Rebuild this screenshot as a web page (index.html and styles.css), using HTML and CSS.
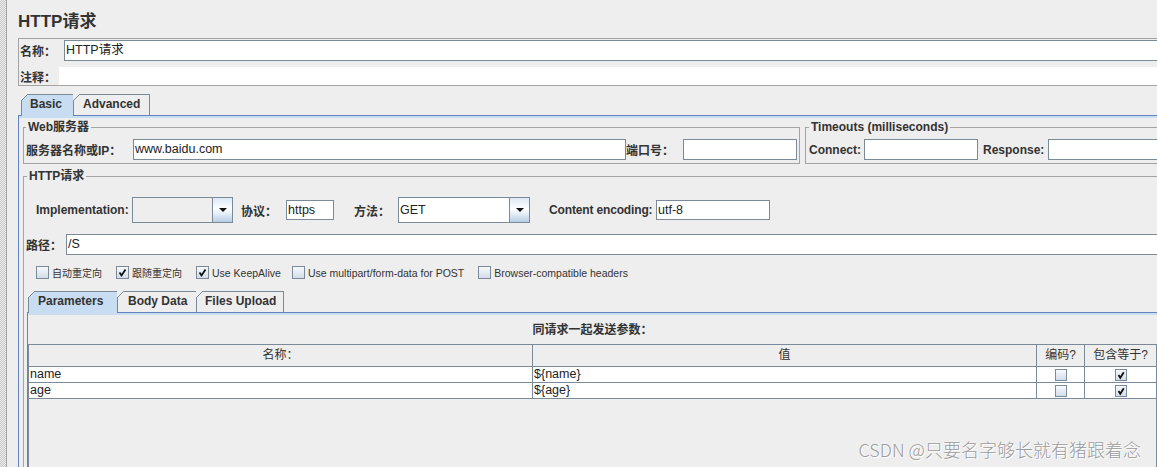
FILE: index.html
```html
<!DOCTYPE html>
<html>
<head>
<meta charset="utf-8">
<title>HTTP请求</title>
<link rel="stylesheet" href="styles.css">
</head>
<body>
<div class="app">
  <div class="strip"></div>
  <div class="main">
    <div class="title">HTTP请求</div>

    <div class="name-panel">
      <div class="name-row">
        <span class="lbl name-lbl">名称：</span>
        <div class="field name-field">HTTP请求</div>
      </div>
      <div class="comment-row">
        <span class="lbl comment-lbl">注释：</span>
        <div class="comment-field"></div>
      </div>
    </div>

    <div class="tabs tabs-main">
      <div class="tab tab-basic selected">Basic</div>
      <div class="tab tab-adv last">Advanced</div>
    </div>

    <div class="tab-panel basic-panel">
      <div class="server-row">
        <fieldset class="group web-group">
          <legend>Web服务器</legend>
          <div class="row">
            <span class="lbl host-lbl">服务器名称或IP：</span>
            <div class="field host-field">www.baidu.com</div>
            <span class="lbl port-lbl">端口号：</span>
            <div class="field port-field"></div>
          </div>
        </fieldset>
        <fieldset class="group timeout-group">
          <legend>Timeouts (milliseconds)</legend>
          <div class="row">
            <span class="lbl connect-lbl">Connect:</span>
            <div class="field t-field"></div>
            <span class="lbl response-lbl">Response:</span>
            <div class="field t-field"></div>
          </div>
        </fieldset>
      </div>

      <fieldset class="group http-group">
        <legend>HTTP请求</legend>
        <div class="impl-row">
          <span class="lbl impl-lbl">Implementation:</span>
          <div class="combo combo-impl">
            <div class="combo-value"></div>
            <div class="combo-btn"><span class="arrow"></span></div>
          </div>
          <span class="lbl proto-lbl">协议：</span>
          <div class="field small-field proto-field">https</div>
          <span class="lbl method-lbl">方法：</span>
          <div class="combo combo-method">
            <div class="combo-value">GET</div>
            <div class="combo-btn"><span class="arrow"></span></div>
          </div>
          <span class="lbl enc-lbl">Content encoding:</span>
          <div class="field small-field enc-field">utf-8</div>
        </div>

        <div class="path-row">
          <span class="lbl path-lbl">路径：</span>
          <div class="field path-field">/S</div>
        </div>

        <div class="check-row">
          <label class="check"><span class="box"></span><span>自动重定向</span></label>
          <label class="check"><span class="box"><svg viewBox="0 0 11 11" width="11" height="11"><path d="M2.5 5.5 L4.5 8.5 L8.5 2.5" fill="none" stroke="#111" stroke-width="1.8"/></svg></span><span>跟随重定向</span></label>
          <label class="check check-keep"><span class="box"><svg viewBox="0 0 11 11" width="11" height="11"><path d="M2.5 5.5 L4.5 8.5 L8.5 2.5" fill="none" stroke="#111" stroke-width="1.8"/></svg></span><span class="latin">Use KeepAlive</span></label>
          <label class="check"><span class="box"></span><span class="latin">Use multipart/form-data for POST</span></label>
          <label class="check"><span class="box"></span><span class="latin">Browser-compatible headers</span></label>
        </div>

        <div class="tabs tabs-params">
          <div class="tab tab-params selected">Parameters</div>
          <div class="tab tab-body">Body Data</div>
          <div class="tab tab-files last">Files Upload</div>
        </div>

        <div class="tab-panel params-panel">
          <div class="params-title">同请求一起发送参数：</div>
          <div class="scroll-pane">
            <div class="grid-row head">
              <div class="cell">名称：</div>
              <div class="cell">值</div>
              <div class="cell">编码?</div>
              <div class="cell">包含等于?</div>
            </div>
            <div class="grid-row">
              <div class="cell">name</div>
              <div class="cell">${name}</div>
              <div class="cell center"><span class="cbox"></span></div>
              <div class="cell center"><span class="cbox"><svg viewBox="0 0 10 10" width="10" height="10"><path d="M2.5 5 L4.3 7.8 L7.8 2.3" fill="none" stroke="#111" stroke-width="1.8"/></svg></span></div>
            </div>
            <div class="grid-row">
              <div class="cell">age</div>
              <div class="cell">${age}</div>
              <div class="cell center"><span class="cbox"></span></div>
              <div class="cell center"><span class="cbox"><svg viewBox="0 0 10 10" width="10" height="10"><path d="M2.5 5 L4.3 7.8 L7.8 2.3" fill="none" stroke="#111" stroke-width="1.8"/></svg></span></div>
            </div>
          </div>
        </div>
      </fieldset>
    </div>
  </div>
</div>
<div class="watermark">CSDN @只要名字够长就有猪跟着念</div>
</body>
</html>
```
FILE: styles.css
```css
* { box-sizing: border-box; }
html, body { margin: 0; padding: 0; }
html { overflow: hidden; }
body {
  width: 1157px;
  height: 467px;
  overflow: hidden;
  position: relative;
  background: #eeeeee;
  font-family: "Liberation Sans", "Noto Sans CJK SC", sans-serif;
  color: #333333;
}
.app {
  display: flex;
  width: 1157px;
  height: 467px;
  overflow: hidden;
}
.strip {
  flex: none;
  width: 7px;
  border-right: 1px solid #a3a3a3;
  background: repeating-conic-gradient(#c6c6c6 0 25%, #eeeeee 0 50%) 0 0 / 2px 2px;
}
.main {
  flex: none;
  width: 1158px;
  height: 467px;
  padding: 11px 0 0 11px;
}
.title {
  height: 22px;
  line-height: 22px;
  font-size: 17px;
  font-weight: bold;
  color: #333;
  white-space: nowrap;
}
.lbl {
  flex: none;
  font-size: 12px;
  font-weight: bold;
  color: #333;
  white-space: nowrap;
}
.field {
  flex: none;
  height: 21px;
  border: 1px solid #7a8a99;
  background: #fff;
  font-size: 12.5px;
  line-height: 19px;
  padding-left: 1px;
  white-space: nowrap;
  overflow: hidden;
  color: #222;
}

/* name / comment panel */
.name-panel {
  margin-top: 5px;
  height: 48px;
  border: 1px solid #a3a3a3;
  padding: 1px 0 0 1px;
}
.name-row { display: flex; align-items: center; height: 21px; }
.name-lbl { width: 44px; }
.name-field { flex: 1; margin-right: 1px; }
.comment-row { display: flex; align-items: center; height: 18px; margin-top: 6px; }
.comment-lbl { width: 39px; }
.comment-field { flex: 1; height: 18px; background: #fff; }

/* tabs */
.tabs {
  display: flex;
  align-items: flex-start;
  height: 21px;
  position: relative;
  z-index: 1;
}
.tabs-main { margin-top: 8px; padding-left: 3px; }
.tabs-params { margin-top: 12px; padding-left: 1px; }
.tab {
  position: relative;
  flex: none;
  height: 21px;
  border-top: 1px solid #7a8a99;
  border-left: 1px solid #7a8a99;
  background: #eeeeee;
  font-size: 12px;
  font-weight: bold;
  line-height: 19px;
  color: #333;
  white-space: nowrap;
}
.tab::before {
  content: "";
  position: absolute;
  left: -1px;
  top: -1px;
  width: 7px;
  height: 7px;
  background: linear-gradient(135deg, #eeeeee 0 calc(50% - 0.7px), #7a8a99 calc(50% - 0.7px) calc(50% + 0.7px), transparent calc(50% + 0.7px));
}
.tab.last { border-right: 1px solid #7a8a99; }
.tab.selected { background: #c8ddf2; height: 22px; }
.tab-basic { width: 52px; padding-left: 8px; }
.tab-adv { width: 77px; padding-left: 9px; }
.tab-params { width: 89px; padding-left: 9px; }
.tab-body { width: 79px; padding-left: 10px; }
.tab-files { width: 88px; padding-left: 8px; }

.tab-panel {
  border-top: 1px solid #6382bf;
  border-left: 1px solid #6382bf;
  border-right: 1px solid #6382bf;
  box-shadow: inset 0 2px 0 #c8ddf2;
}
.basic-panel { padding: 4px 2px 0 4px; height: 360px; }

/* fieldsets */
fieldset.group {
  margin: 0;
  min-width: 0;
  border: 1px solid #a3a3a3;
  padding: 5px 2px 3px 2px;
}
fieldset.group legend {
  padding: 0 2px;
  font-size: 12px;
  font-weight: bold;
  line-height: 14px;
  color: #333;
  white-space: nowrap;
}
.server-row { display: flex; align-items: flex-start; }
.web-group { flex: none; width: 777px; }
.timeout-group { flex: 1; margin-left: 5px !important; padding-left: 3px !important; }
.row { display: flex; align-items: center; height: 21px; }
.host-lbl { width: 107px; }
.host-field { width: 493px; }
.port-lbl { width: 57px; }
.port-field { width: 114px; }
.connect-lbl { width: 55px; }
.t-field { width: 114px; }
.response-lbl { width: 65px; margin-left: 5px; }

.http-group { margin-top: 5px !important; padding: 14px 3px 0 3px !important; height: 310px; }

.impl-row { display: flex; align-items: center; height: 26px; }
.impl-lbl { margin-left: 9px; width: 96px; }
.combo {
  flex: none;
  display: flex;
  height: 26px;
  border: 1px solid #7a8a99;
  background: #fff;
}
.combo-impl { width: 101px; background: #eeeeee; }
.combo-method { width: 132px; }
.combo-value {
  flex: 1;
  font-size: 12.5px;
  line-height: 24px;
  padding-left: 1px;
  color: #222;
}
.combo-btn {
  flex: none;
  width: 20px;
  border-left: 1px solid #7a8a99;
  background: linear-gradient(#dde8f3, #ffffff 45%, #b8cfe5);
  display: flex;
  align-items: center;
  justify-content: center;
}
.arrow {
  width: 0;
  height: 0;
  border-left: 4px solid transparent;
  border-right: 4px solid transparent;
  border-top: 4px solid #111;
}
.proto-lbl { margin-left: 8px; width: 45px; }
.small-field { height: 20px; line-height: 18px; }
.proto-field { width: 48px; }
.method-lbl { margin-left: 20px; width: 44px; }
.enc-lbl { margin-left: 19px; width: 107px; letter-spacing: -0.15px; }
.enc-field { width: 114px; }

.path-row { display: flex; align-items: center; height: 21px; margin-top: 11px; }
.path-lbl { width: 40px; margin-left: -1px; }
.path-field { flex: 1; }

.check-row {
  display: flex;
  align-items: center;
  height: 13px;
  margin-top: 11px;
  padding-left: 9px;
  font-size: 10px;
  color: #333;
}
.check { display: flex; align-items: center; margin-right: 14px; white-space: nowrap; }
.check-keep { margin-right: 11px; }
.latin { font-size: 10.5px; }
.box {
  flex: none;
  width: 13px;
  height: 13px;
  margin-right: 3px;
  border: 1px solid #7a8a99;
  background: linear-gradient(#f6f9fc, #d3dde8);
  display: flex;
  align-items: center;
  justify-content: center;
}

/* parameters panel */
.params-panel { padding-top: 10px; height: 170px; }
.params-title {
  text-align: center;
  font-size: 12px;
  font-weight: bold;
  line-height: 14px;
  color: #333;
}
.scroll-pane {
  margin-top: 7px;
  height: 130px;
  border-top: 1px solid #7a8a99;
  border-left: 1px solid #7a8a99;
  border-right: 1px solid #7a8a99;
}
.grid-row {
  display: grid;
  grid-template-columns: 504px 504px 48px 71px;
  height: 16px;
  background: #fff;
}
.grid-row.head { height: 22px; background: #eeeeee; }
.cell {
  border-bottom: 1px solid #7a8a99;
  border-right: 1px solid #7a8a99;
  font-size: 12.5px;
  line-height: 15px;
  padding-left: 1px;
  color: #222;
  white-space: nowrap;
  overflow: hidden;
}
.cell:last-child { border-right: none; }
.head .cell {
  text-align: center;
  font-size: 12px;
  line-height: 21px;
  padding-left: 0;
  color: #333;
}
.cell.center { display: flex; align-items: center; justify-content: center; padding-left: 0; }
.cbox {
  width: 12px;
  height: 12px;
  border: 1px solid #7a8a99;
  background: linear-gradient(#f6f9fc, #d3dde8);
  display: flex;
  align-items: center;
  justify-content: center;
}

.watermark {
  position: absolute;
  right: 16px;
  bottom: 7px;
  font-family: "Noto Sans CJK SC", sans-serif;
  font-size: 18px;
  font-weight: 300;
  line-height: 22px;
  color: #9a9a9a;
  text-shadow: 0 0 2px #ffffff, 1px 1px 0 #ffffff;
  white-space: nowrap;
}
```
